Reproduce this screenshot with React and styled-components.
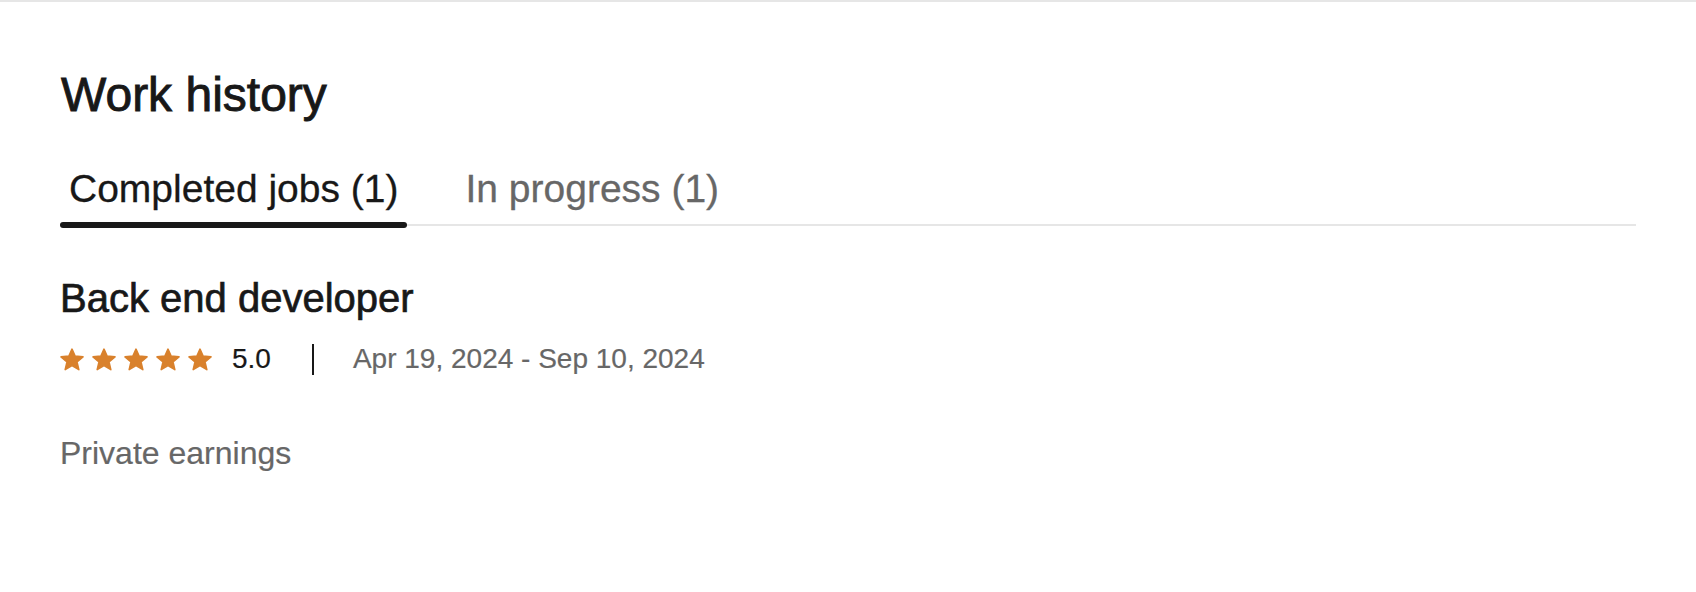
import styled, { createGlobalStyle } from 'styled-components';
import { useState } from 'react';

const GlobalStyle = createGlobalStyle`
  html, body {
    margin: 0;
    padding: 0;
    background: #ffffff;
  }
  body {
    font-family: 'Liberation Sans', Arial, sans-serif;
    color: #181818;
  }
`;

const Section = styled.section`
  border-top: 2px solid #e6e6e6;
  padding: 65px 60px 0 60px;
`;

const Title = styled.h2`
  margin: 0 0 0 1px;
  font-size: 48px;
  line-height: 56px;
  font-weight: 400;
  color: #181818;
  -webkit-text-stroke: 0.9px #181818;
`;

const TabList = styled.div`
  display: flex;
  gap: 49px;
  margin-top: 42px;
  border-bottom: 2px solid #e6e6e6;
`;

const Tab = styled.button`
  position: relative;
  background: none;
  border: none;
  padding: 0 9px 11px 9px;
  font-family: inherit;
  font-size: 39px;
  line-height: 48px;
  color: ${(props) => (props.$active ? '#181818' : '#676767')};
  -webkit-text-stroke: 0.3px ${(props) => (props.$active ? '#181818' : '#676767')};
  cursor: pointer;

  &::after {
    content: '';
    display: ${(props) => (props.$active ? 'block' : 'none')};
    position: absolute;
    left: 0;
    right: 0;
    bottom: -4px;
    height: 6px;
    border-radius: 3px;
    background: #181818;
  }
`;

const Job = styled.div`
  padding-top: 48px;
`;

const JobTitle = styled.h3`
  margin: 0;
  font-size: 40px;
  line-height: 48px;
  font-weight: 400;
  color: #181818;
  -webkit-text-stroke: 0.7px #181818;
`;

const MetaRow = styled.div`
  display: flex;
  align-items: center;
  height: 32px;
  margin-top: 21px;
  font-size: 28px;
  line-height: 32px;
`;

const Stars = styled.div`
  display: flex;
  gap: 8px;
  margin-right: 20px;
`;

const Score = styled.span`
  color: #181818;
  -webkit-text-stroke: 0.2px #181818;
`;

const Divider = styled.span`
  width: 2px;
  height: 31px;
  background: #181818;
  margin: 0 39px 0 41px;
`;

const Dates = styled.span`
  color: #676767;
  -webkit-text-stroke: 0.2px #676767;
`;

const Earnings = styled.p`
  margin: 58px 0 0 0;
  font-size: 32px;
  line-height: 40px;
  color: #676767;
  -webkit-text-stroke: 0.2px #676767;
`;

const Star = () => (
  <svg width="24" height="23" viewBox="0 0 24 23">
    <path
      d="M12 1.2L15.1 8L23 8.9L17 13.9L18.8 21.6L12 17.6L5.2 21.6L7 13.9L1 8.9L8.9 8Z"
      fill="#d9812c"
      stroke="#d9812c"
      strokeWidth="1.6"
      strokeLinejoin="round"
    />
  </svg>
);

const App = () => {
  const [tab, setTab] = useState('completed');

  return (
    <>
      <GlobalStyle />
      <Section>
        <Title>Work history</Title>
        <TabList>
          <Tab $active={tab === 'completed'} onClick={() => setTab('completed')}>
            Completed jobs (1)
          </Tab>
          <Tab $active={tab === 'progress'} onClick={() => setTab('progress')}>
            In progress (1)
          </Tab>
        </TabList>
        <Job>
          <JobTitle>Back end developer</JobTitle>
          <MetaRow>
            <Stars>
              {[0, 1, 2, 3, 4].map((i) => (
                <Star key={i} />
              ))}
            </Stars>
            <Score>5.0</Score>
            <Divider />
            <Dates>Apr 19, 2024 - Sep 10, 2024</Dates>
          </MetaRow>
          <Earnings>Private earnings</Earnings>
        </Job>
      </Section>
    </>
  );
};

export default App;
